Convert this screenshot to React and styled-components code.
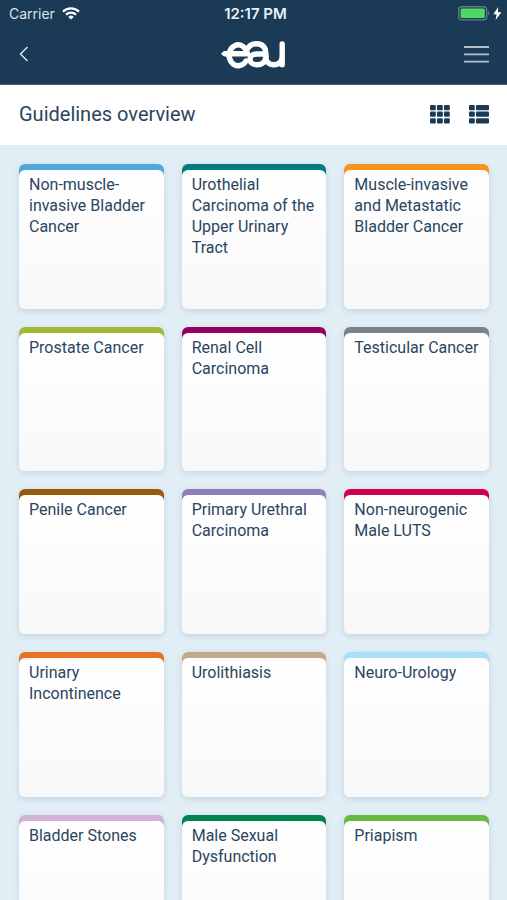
import styled, { createGlobalStyle } from "styled-components"

const GlobalStyle = createGlobalStyle`
    * {
        box-sizing: border-box;
    }
    body {
        margin: 0;
        font-family: Roboto, "Liberation Sans", sans-serif;
        color: #2b4560;
    }
`

const Container = styled.div`
    height: 100vh;
    display: flex;
    flex-direction: column;
    background-color: #e1eef6;
`

const Header = styled.header`
    background-color: #1b3a55;
    border-bottom: 1px solid #46607c;
    color: white;
`

const StatusBar = styled.div`
    display: grid;
    grid-template-columns: 1fr auto 1fr;
    align-items: center;
    height: 27px;
    padding: 0 5px 0 9px;
    font-family: Inter, "Liberation Sans", sans-serif;
    font-size: 14px;
`

const Carrier = styled.div`
    display: flex;
    align-items: center;
    gap: 7px;
    color: #dbe5ee;
`

const Time = styled.div`
    font-size: 15px;
    font-weight: 600;
    color: #e9f0f6;
`

const Battery = styled.div`
    display: flex;
    justify-content: flex-end;
`

const Nav = styled.nav`
    display: grid;
    grid-template-columns: 1fr auto 1fr;
    align-items: center;
    height: 57px;
    padding: 0 18px 4px;
`

const IconButton = styled.button`
    display: flex;
    padding: 0;
    border: none;
    background: none;
    color: ${props=>props.color};
    justify-self: ${props=>props.$side};
    cursor: pointer;
`

const LogoLink = styled.a`
    display: flex;
`

const TitleBar = styled.div`
    display: flex;
    align-items: center;
    justify-content: space-between;
    height: 60px;
    flex-shrink: 0;
    padding: 0 18px 2px 19px;
    background-color: white;
`

const Title = styled.h1`
    margin: 0;
    font-size: 20px;
    font-weight: 400;
`

const ViewButtons = styled.div`
    display: flex;
    gap: 19px;
`

const Main = styled.main`
    flex: 1;
    min-height: 0;
    overflow-y: auto;
    scrollbar-width: none;
`

const Grid = styled.div`
    display: grid;
    grid-template-columns: repeat(3, 1fr);
    gap: 18px;
    padding: 19px 18px 19px 19px;
`

const Card = styled.a`
    display: flex;
    aspect-ratio: 1;
    padding-top: 6px;
    border-radius: 6px;
    background: linear-gradient(${props=>props.color} 14px, #f8f8f8 14px);
    box-shadow: 0 2px 6px rgba(27, 58, 85, 0.14);
    color: inherit;
    text-decoration: none;
`

const CardText = styled.span`
    flex: 1;
    padding: 4px 10px;
    border-radius: 6px;
    background: linear-gradient(white, #f8f8f8);
    font-size: 16px;
    line-height: 21px;
`

const guidelines = [
    { title: "Non-muscle-invasive Bladder Cancer", color: "#53a6d9" },
    { title: "Urothelial Carcinoma of the Upper Urinary Tract", color: "#007c7f" },
    { title: "Muscle-invasive and Metastatic Bladder Cancer", color: "#f7941e" },
    { title: "Prostate Cancer", color: "#a3b934" },
    { title: "Renal Cell Carcinoma", color: "#96005f" },
    { title: "Testicular Cancer", color: "#7c8285" },
    { title: "Penile Cancer", color: "#975a0a" },
    { title: "Primary Urethral Carcinoma", color: "#8e80bb" },
    { title: "Non-neurogenic Male LUTS", color: "#d1004b" },
    { title: "Urinary Incontinence", color: "#e87322" },
    { title: "Urolithiasis", color: "#c2a98a" },
    { title: "Neuro-Urology", color: "#aadff8" },
    { title: "Bladder Stones", color: "#d3b0d5" },
    { title: "Male Sexual Dysfunction", color: "#008550" },
    { title: "Priapism", color: "#68ba42" },
]

const WifiIcon = () => (
    <svg width="18" height="13" viewBox="0 0 18 13" fill="none" stroke="white" strokeWidth="2.2">
        <path d="M1 4.6a11.3 11.3 0 0 1 16 0" />
        <path d="M4 7.6a7.1 7.1 0 0 1 10 0" />
        <path d="M9 12.6 6.3 9.9a3.8 3.8 0 0 1 5.4 0z" fill="white" stroke="none" />
    </svg>
)

const BatteryIcon = () => (
    <svg width="44" height="15" viewBox="0 0 44 15">
        <rect x="0.7" y="0.7" width="28" height="13.2" rx="3.4" fill="none" stroke="#66798c" strokeWidth="1.4" />
        <rect x="2.6" y="2.6" width="24.2" height="9.4" rx="1.6" fill="#4cd964" />
        <path d="M30 5v4.6c1.6-.6 1.6-4 0-4.6z" fill="#66798c" />
        <path d="M40.2 1 35.4 8.2h3.2l-1 5.8 5.8-7.7h-3.5z" fill="white" />
    </svg>
)

const BackIcon = () => (
    <svg width="12" height="16" viewBox="0 0 12 16" fill="none" stroke="currentColor" strokeWidth="1.5">
        <path d="M9.5 1 2.5 8l7 7" />
    </svg>
)

const MenuIcon = () => (
    <svg width="25" height="18" viewBox="0 0 25 18" stroke="currentColor" strokeWidth="1.8">
        <path d="M0 2h25M0 9.3h25M0 16.6h25" />
    </svg>
)

const Logo = () => (
    <svg width="66" height="31" viewBox="0 -3 66 31" fill="none" stroke="white" strokeWidth="5.4" strokeLinecap="round" strokeLinejoin="round">
        <path d="M25 20A9.2 10.4 0 1 1 26.4 12.8H4" />
        <path d="M27.5 6.6C29 3.8 32 2.8 35.5 2.8c6 0 9.2 3.4 9.2 9.2v4" />
        <path d="M44.7 13H36c-4 0-7 1.8-7 5.2 0 3.4 3 5.5 7 5.5 5.4 0 8.7-3 8.7-7.7z" />
        <path d="M44.7 15c0 5.6 3 8.7 8 8.7 5.2 0 8.5-3.4 8.5-8.7V3v20.7" />
        <path d="M1 12.8 5 11v3.6z" fill="white" strokeWidth="1.6" />
    </svg>
)

const GridIcon = () => (
    <svg width="20" height="20" viewBox="0 -1 20 20" fill="currentColor">
        {[0, 6.6, 13.2].map(y=>[0, 7, 14].map(x=>(
            <rect key={`${x}-${y}`} x={x} y={y} width="5.8" height="5.2" rx="1" />
        )))}
    </svg>
)

const ListIcon = () => (
    <svg width="20" height="20" viewBox="0 -1 20 20" fill="currentColor">
        {[0, 6.6, 13.2].map(y=>(
            <g key={y}>
                <rect x="0" y={y} width="5.8" height="5.2" rx="1" />
                <rect x="7" y={y} width="13" height="5.2" rx="1" />
            </g>
        ))}
    </svg>
)

const App = () => {
  return (
    <Container>
        <GlobalStyle/>
        <Header>
            <StatusBar>
                <Carrier>Carrier <WifiIcon/></Carrier>
                <Time>12:17 PM</Time>
                <Battery><BatteryIcon/></Battery>
            </StatusBar>
            <Nav>
                <IconButton aria-label="Back" color="#dbe5ee" $side="start"><BackIcon/></IconButton>
                <LogoLink href="#" aria-label="Home"><Logo/></LogoLink>
                <IconButton aria-label="Menu" color="#b4c1cc" $side="end"><MenuIcon/></IconButton>
            </Nav>
        </Header>
        <TitleBar>
            <Title>Guidelines overview</Title>
            <ViewButtons>
                <IconButton aria-label="Grid view" color="#1b3a55"><GridIcon/></IconButton>
                <IconButton aria-label="List view" color="#1b3a55"><ListIcon/></IconButton>
            </ViewButtons>
        </TitleBar>
        <Main>
            <Grid>
                {guidelines.map(item=>(
                    <Card key={item.title} href="#" color={item.color}>
                        <CardText>{item.title}</CardText>
                    </Card>
                ))}
            </Grid>
        </Main>
    </Container>
  )
}

export default App
